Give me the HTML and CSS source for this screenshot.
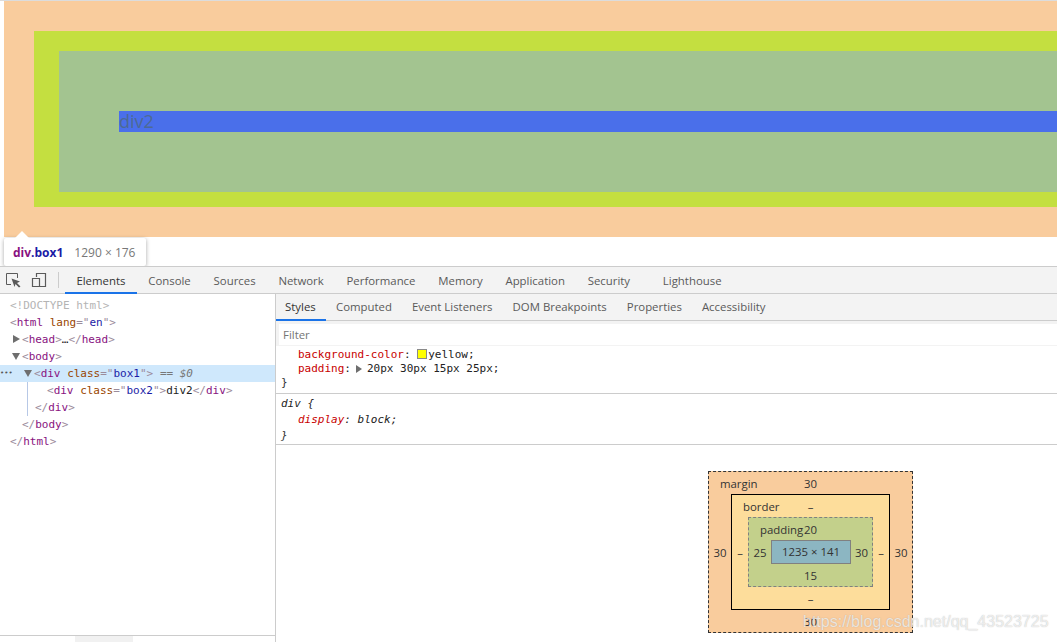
FILE: index.html
```html
<!DOCTYPE html>
<html lang="en">
<head>
<meta charset="utf-8">
<title>DevTools box model</title>
<link rel="stylesheet" href="styles.css">
</head>
<body>
<section class="preview">
  <div class="pv-box1"><div class="pv-border"><div class="pv-padding"><div class="pv-content">div2</div></div></div></div>
  <div class="tip"><span class="tip-arrow"></span><b class="tip-el">div</b><b class="tip-cls">.box1</b><span class="tip-size">1290 × 176</span></div>
</section>
<nav class="toolbar">
  <span class="tool-icon">
    <svg width="16" height="16" viewBox="0 0 16 16"><path d="M6 12.5H1.5V1.5H12.5V6" fill="none" stroke="#5a5a5a" stroke-width="1"/><path d="M6.5 6.5L15 9.5L12 11L15.5 14.5L14 15.5L10.5 12L9.5 15Z" fill="#5a5a5a"/></svg>
  </span>
  <span class="tool-icon">
    <svg width="16" height="16" viewBox="0 0 16 16"><path d="M5.5 5V1.5H14.5V14.5H1.5V6.5H8.5V14.5" fill="none" stroke="#5a5a5a" stroke-width="1.2"/></svg>
  </span>
  <span class="tool-sep"></span>
  <span class="tab active">Elements</span><span class="tab">Console</span><span class="tab">Sources</span><span class="tab">Network</span><span class="tab">Performance</span><span class="tab">Memory</span><span class="tab">Application</span><span class="tab">Security</span><span class="tab tab-far">Lighthouse</span>
</nav>
<main class="panels">
  <section class="dom">
    <div class="dom-tree">
      <div class="row l0"><span class="doc">&lt;!DOCTYPE html&gt;</span></div>
      <div class="row l0"><span class="br">&lt;</span><span class="tag">html</span> <span class="an">lang</span><span class="br">="</span><span class="av">en</span><span class="br">"&gt;</span></div>
      <div class="row l1"><i class="tri right"></i><span class="br">&lt;</span><span class="tag">head</span><span class="br">&gt;</span>…<span class="br">&lt;/</span><span class="tag">head</span><span class="br">&gt;</span></div>
      <div class="row l1"><i class="tri down"></i><span class="br">&lt;</span><span class="tag">body</span><span class="br">&gt;</span></div>
      <div class="row l2 sel"><span class="dots">•••</span><i class="tri down"></i><span class="br">&lt;</span><span class="tag">div</span> <span class="an">class</span><span class="br">="</span><span class="av">box1</span><span class="br">"&gt;</span> <span class="eq">== <em>$0</em></span></div>
      <div class="nest">
        <div class="row l3"><span class="br">&lt;</span><span class="tag">div</span> <span class="an">class</span><span class="br">="</span><span class="av">box2</span><span class="br">"&gt;</span>div2<span class="br">&lt;/</span><span class="tag">div</span><span class="br">&gt;</span></div>
        <div class="row l2b"><span class="br">&lt;/</span><span class="tag">div</span><span class="br">&gt;</span></div>
      </div>
      <div class="row l1b"><span class="br">&lt;/</span><span class="tag">body</span><span class="br">&gt;</span></div>
      <div class="row l0"><span class="br">&lt;/</span><span class="tag">html</span><span class="br">&gt;</span></div>
    </div>
    <div class="crumbs"><span class="crumb-thumb"></span></div>
  </section>
  <section class="side">
    <div class="subtabs">
      <span class="subtab active">Styles</span><span class="subtab">Computed</span><span class="subtab">Event Listeners</span><span class="subtab">DOM Breakpoints</span><span class="subtab">Properties</span><span class="subtab">Accessibility</span>
    </div>
    <div class="filter"><span class="filter-input">Filter</span></div>
    <div class="rule rule-a">
      <div class="decl"><span class="prop">background-color</span>: <span class="swatch"></span>yellow;</div>
      <div class="decl"><span class="prop">padding</span>:<i class="tri right small"></i>20px 30px 15px 25px;</div>
      <div class="close">}</div>
    </div>
    <div class="rule rule-b">
      <div class="sel-line">div {</div>
      <div class="decl"><span class="prop">display</span>: block;</div>
      <div class="close">}</div>
    </div>
    <div class="metrics">
      <div class="bm bm-margin">
        <span class="bm-label">margin</span><span class="top">30</span>
        <span class="left">30</span>
        <div class="bm bm-border">
          <span class="bm-label">border</span><span class="top">–</span>
          <span class="left">–</span>
          <div class="bm bm-padding">
            <span class="bm-label">padding</span><span class="top">20</span>
            <span class="left">25</span>
            <div class="bm-content">1235 × 141</div>
            <span class="right">30</span>
            <span class="bottom">15</span>
          </div>
          <span class="right">–</span>
          <span class="bottom">–</span>
        </div>
        <span class="right">30</span>
        <span class="bottom">30</span>
      </div>
    </div>
  </section>
</main>
<span class="watermark">https://blog.csdn.net/qq_43523725</span>
</body>
</html>
```
FILE: styles.css
```css
* { box-sizing: border-box; }
html, body { margin: 0; height: 642px; overflow: hidden; background: #fff; }
body { font-family: "Open Sans", "Noto Sans", sans-serif; font-size: 11.4px; color: #333; position: relative; }

.preview { height: 266px; border-top: 1px solid #dcdcdc; padding-left: 4px; position: relative; overflow: hidden; }
.pv-box1 { height: 236px; background: #f9cc9d; padding: 30px 0 30px 30px; }
.pv-border { height: 176px; background: #c4df40; padding: 20px 0 15px 25px; }
.pv-padding { height: 141px; background: #a3c490; padding: 60px 0 0 60px; }
.pv-content { height: 21px; background: #4a6fea; color: #4d6a94; font: 18px/21px "Open Sans", sans-serif; }

.tip { position: absolute; left: 4px; top: 237px; height: 28px; width: 142px; background: #fff; box-shadow: 0 1px 4px rgba(0,0,0,.35); border-radius: 2px; padding-left: 9px; display: flex; align-items: center; font-size: 12px; white-space: nowrap; z-index: 2; }
.tip-arrow { position: absolute; left: 11px; top: -7px; width: 14px; height: 7px; background: #fff; clip-path: polygon(0 100%, 50% 0, 100% 100%); }
.tip-el { color: #881280; font-weight: 700; }
.tip-cls { color: #1a1aa6; font-weight: 700; }
.tip-size { color: #777; margin-left: 11px; }

.toolbar { height: 28px; background: #f3f3f3; border-top: 1px solid #ccc; border-bottom: 1px solid #ccc; display: flex; align-items: stretch; }
.tool-icon { width: 16px; margin-left: 5px; margin-right: 2px; display: flex; align-items: center; }
.tool-icon + .tool-icon { margin-left: 8px; margin-right: 0; }
.tool-sep { width: 1px; height: 16px; background: #ccc; align-self: center; margin: 0 6px 0 11px; }
.tab { padding: 0 11.4px; line-height: 27px; color: #5a5a5a; white-space: nowrap; }
.tab.active { color: #333; border-bottom: 2px solid #1a73e8; height: 27px; }
.tab-far { margin-left: 10px; }

.panels { display: flex; height: 348px; }
.dom { width: 276px; border-right: 1px solid #ccc; display: flex; flex-direction: column; }
.dom-tree { flex: 1; padding-top: 3px; }
.row { height: 17px; line-height: 17px; font-family: "DejaVu Sans Mono", monospace; font-size: 11px; white-space: pre; position: relative; color: #222; }
.l0 { padding-left: 10px; }
.l1 { padding-left: 22px; }
.l1b { padding-left: 22px; }
.l2 { padding-left: 34px; }
.l2b { padding-left: 35px; }
.l3 { padding-left: 46px; }
.sel { background: #cfe8fc; }
.nest { margin-left: 27px; border-left: 1px solid #b7c8e6; }
.nest .l3 { padding-left: 19px; }
.nest .l2b { padding-left: 7px; }
.doc { color: #b4b4b4; }
.row .br { color: #9b8b9b; }
.tag { color: #881280; }
.an { color: #994500; }
.av { color: #1a1aa6; }
.eq { color: #777; }
.eq em { font-style: italic; }
.dots { position: absolute; left: 0; top: 0; font-size: 7px; color: #555; }
.tri { display: inline-block; width: 0; height: 0; border-style: solid; position: absolute; }
.tri.right { border-width: 4px 0 4px 7px; border-color: transparent transparent transparent #6e6e6e; top: 4px; margin-left: -9px; }
.tri.down { border-width: 7px 4px 0 4px; border-color: #6e6e6e transparent transparent transparent; top: 5px; margin-left: -10px; }
.tri.right.small { position: static; margin: 0 5px 0 5px; border-width: 4px 0 4px 6px; vertical-align: -1px; }
.crumbs { height: 7px; border-top: 1px solid #ccc; padding-left: 75px; }
.crumb-thumb { display: block; width: 58px; height: 6px; background: #f1f1f1; }

.side { flex: 1; min-width: 0; }
.subtabs { height: 27px; background: #f3f3f3; border-bottom: 1px solid #ccc; display: flex; }
.subtab { padding: 0 10px; line-height: 26px; color: #5a5a5a; white-space: nowrap; }
.subtab.active { color: #333; padding: 0 9px; width: 50px; border-bottom: 2px solid #1a73e8; height: 27px; }
.filter { height: 25px; background: #f3f3f3; padding: 3px 0 1px 3px; }
.filter-input { display: block; height: 21px; background: #fff; padding-left: 4px; line-height: 21px; color: #757575; }
.rule { font-family: "DejaVu Sans Mono", monospace; font-size: 11px; line-height: 14px; border-bottom: 1px solid #ccc; padding: 3px 5px 3px; color: #222; }
.rule-a { height: 48px; padding-top: 2px; }
.rule-b { height: 51px; font-style: italic; padding-top: 2px; line-height: 16px; }
.decl { padding-left: 17px; white-space: pre; }
.prop { color: #c80000; }
.swatch { display: inline-block; width: 10px; height: 10px; background: #ff0; border: 1px solid #8a8a8a; margin-right: 1px; vertical-align: -1px; }
.close { color: #333; }

.metrics { display: flex; padding: 26px 0 0 432px; font-size: 11.4px; color: #333; }
.bm { display: grid; text-align: center; position: relative; line-height: 23px; }
.bm-margin { width: 205px; height: 162px; background: #f9cc9d; border: 1px dashed #333; grid-template-columns: 22px 1fr 22px; grid-template-rows: 22px 1fr 22px; flex: none; }
.bm-border { width: 159px; height: 116px; background: #fddd9b; border: 1px solid #000; grid-column: 2; grid-template-columns: 16px 1fr 16px; grid-template-rows: 22px 1fr 22px; }
.bm-padding { width: 125px; height: 70px; background: #c3d08b; border: 1px dashed #808080; grid-column: 2; grid-template-columns: 22px 1fr 21px; grid-template-rows: 22px 1fr 22px; }
.bm-content { width: 80px; height: 24px; line-height: 22px; background: #8cb6c2; border: 1px solid #808080; grid-column: 2; }
.top { grid-column: 1 / -1; grid-row: 1; }
.left { grid-column: 1; grid-row: 2; align-self: center; }
.right { grid-column: 3; grid-row: 2; align-self: center; }
.bottom { grid-column: 1 / -1; grid-row: 3; }
.bm > .bm, .bm > .bm-content { grid-row: 2; }
.bm-label { position: absolute; left: 11px; top: 0; }

.watermark { position: absolute; left: 803px; top: 612px; font: 16px/20px "Liberation Sans", sans-serif; color: rgba(255,255,255,.72); text-shadow: 0 0 1px rgba(120,120,120,.55); white-space: nowrap; }
```
